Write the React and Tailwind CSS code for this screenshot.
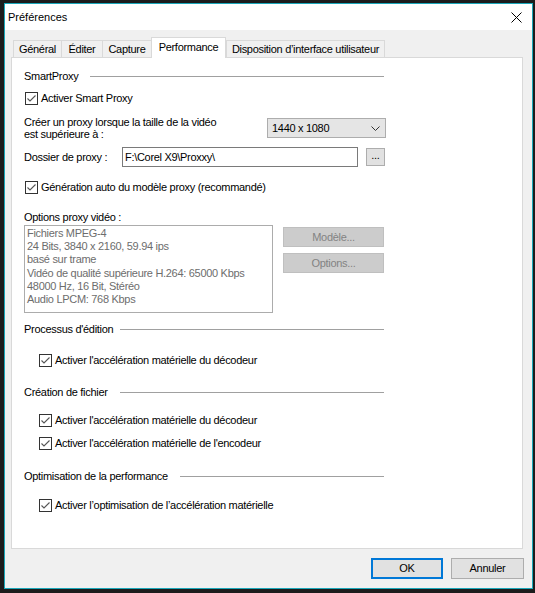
import React from "react";

function Check() {
  return (
    <span className="w-[13px] h-[13px] border border-[#333333] bg-white flex items-center justify-center shrink-0">
      <svg width="11" height="11" viewBox="0 0 11 11">
        <polyline points="1.5,5.5 4,8 9.5,2.5" fill="none" stroke="#555555" strokeWidth="1.1" />
      </svg>
    </span>
  );
}

function CheckRow({ label, indent, mt }) {
  return (
    <div className={`flex items-center h-[14px] gap-[3px] ${indent ? "pl-[15px]" : "pl-[1px]"} ${mt}`}>
      <Check />
      <span className="whitespace-nowrap">{label}</span>
    </div>
  );
}

function Header({ label, lw, mt }) {
  return (
    <div className={`flex items-center h-[14px] w-[360px] ${mt}`}>
      <span className={`whitespace-nowrap shrink-0 ${lw}`}>{label}</span>
      <span className="flex-1 h-px bg-[#a0a0a0]"></span>
    </div>
  );
}

export default function App() {
  const tabBase =
    "h-[17px] border-t border-l border-[#d9d9d9] bg-[#f0f0f0] flex items-center justify-center pt-[1px] whitespace-nowrap";
  return (
    <div className="w-[535px] h-[593px] bg-[#1c1c1c] pt-[3px] pl-[4px] overflow-hidden font-['Liberation_Sans',Arial,sans-serif] text-[11px] text-black tracking-[-0.3px]">
      <div className="w-[529px] h-[586px] border border-[#1aa7b9] bg-[#f0f0f0] flex flex-col">
        {/* Title bar */}
        <div className="h-[26px] bg-white flex items-center justify-between pl-[3px] pr-[10px] shrink-0">
          <span className="tracking-normal">Préférences</span>
          <svg width="11" height="11" viewBox="0 0 11 11">
            <path d="M0.5 0.5 L10.5 10.5 M10.5 0.5 L0.5 10.5" stroke="#000" strokeWidth="1" fill="none" />
          </svg>
        </div>
        {/* Tabs */}
        <div className="h-[27px] flex items-end pl-[8px] shrink-0">
          <div className={`${tabBase} w-[48px]`}>Général</div>
          <div className={`${tabBase} w-[41px]`}>Éditer</div>
          <div className={`${tabBase} w-[49px]`}>Capture</div>
          <div className="h-[21px] w-[75px] border-t border-l border-r border-[#d9d9d9] bg-white flex items-center justify-center -mb-px relative z-10 pb-[1px]">
            Performance
          </div>
          <div className={`${tabBase} w-[159px] border-r`}>Disposition d’interface utilisateur</div>
        </div>
        {/* Panel */}
        <div className="ml-[6px] w-[512px] h-[492px] border border-[#d9d9d9] bg-white pl-[12px] flex flex-col shrink-0">
          <Header label="SmartProxy" lw="w-[66px]" mt="mt-[11px]" />
          <CheckRow label="Activer Smart Proxy" mt="mt-[8px]" />
          <div className="mt-[11px] h-[22px] flex">
            <div className="w-[243px] h-[22px] leading-[12px]">
              Créer un proxy lorsque la taille de la vidéo
              <br />
              est supérieure à :
            </div>
            <div className="mt-[2px] w-[119px] h-[20px] border border-[#adadad] bg-[#e5e5e5] flex items-center justify-between pl-[4px] pr-[5px]">
              <span>1440 x 1080</span>
              <svg width="9" height="5" viewBox="0 0 9 5">
                <polyline points="0.5,0.5 4.5,4.5 8.5,0.5" fill="none" stroke="#333" strokeWidth="1" />
              </svg>
            </div>
          </div>
          <div className="mt-[9px] h-[20px] flex items-center">
            <span className="w-[98px] pt-[1px]">Dossier de proxy :</span>
            <div className="w-[236px] h-[20px] border border-[#7a7a7a] bg-white flex items-center pl-[2px]">
              F:\Corel X9\Proxxy\
            </div>
            <div className="ml-[8px] w-[19px] h-[18px] border border-[#adadad] bg-[#e1e1e1] flex items-center justify-center leading-none pb-[3px]">
              ...
            </div>
          </div>
          <CheckRow label="Génération auto du modèle proxy (recommandé)" mt="mt-[13px]" />
          <div className="mt-[16px] h-[14px] flex items-center">Options proxy vidéo :</div>
          <div className="mt-[1px] flex">
            <div className="w-[249px] h-[88px] border border-[#acacac] pl-[2px] pt-[1px] leading-[13.2px] text-[#6d6d6d]">
              <div>Fichiers MPEG-4</div>
              <div>24 Bits, 3840 x 2160, 59.94 ips</div>
              <div>basé sur trame</div>
              <div>Vidéo de qualité supérieure H.264: 65000 Kbps</div>
              <div>48000 Hz, 16 Bit, Stéréo</div>
              <div>Audio LPCM: 768 Kbps</div>
            </div>
            <div className="ml-[10px] mt-[2px] flex flex-col gap-[6px]">
              <div className="w-[101px] h-[20px] border border-[#bfbfbf] bg-[#cccccc] text-[#838383] flex items-center justify-center">
                Modèle...
              </div>
              <div className="w-[101px] h-[20px] border border-[#bfbfbf] bg-[#cccccc] text-[#838383] flex items-center justify-center">
                Options...
              </div>
            </div>
          </div>
          <Header label="Processus d'édition" lw="w-[96px]" mt="mt-[9px]" />
          <CheckRow label="Activer l'accélération matérielle du décodeur" indent mt="mt-[17px]" />
          <Header label="Création de fichier" lw="w-[96px]" mt="mt-[18px]" />
          <CheckRow label="Activer l'accélération matérielle du décodeur" indent mt="mt-[14px]" />
          <CheckRow label="Activer l'accélération matérielle de l'encodeur" indent mt="mt-[9px]" />
          <Header label="Optimisation de la performance" lw="w-[156px]" mt="mt-[19px]" />
          <CheckRow label="Activer l’optimisation de l’accélération matérielle" indent mt="mt-[15px]" />
        </div>
        {/* Buttons */}
        <div className="flex justify-end gap-[8px] pr-[8px] mt-[9px]">
          <div className="w-[72px] h-[21px] border-2 border-[#0078d7] bg-[#e1e1e1] flex items-center justify-center">
            OK
          </div>
          <div className="w-[73px] h-[21px] border border-[#adadad] bg-[#e1e1e1] flex items-center justify-center">
            Annuler
          </div>
        </div>
      </div>
    </div>
  );
}
